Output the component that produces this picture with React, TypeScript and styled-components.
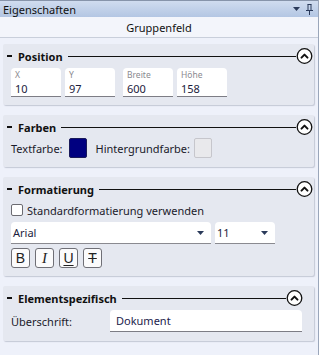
import styled, { createGlobalStyle } from 'styled-components';

const GlobalStyle = createGlobalStyle`
  html, body {
    margin: 0;
    padding: 0;
    background: #eef1fa;
  }
  body {
    font-family: "Noto Sans", "Open Sans", sans-serif;
    font-size: 11px;
    color: #1a1a1a;
  }
`;

const Panel = styled.div`
  width: 318px;
  height: 355px;
  display: flex;
  flex-direction: column;
  border-right: 1px solid #9aa6ba;
  background: #eef1fa;
  overflow: hidden;
`;

const TitleBar = styled.div`
  height: 16px;
  display: flex;
  align-items: center;
  justify-content: space-between;
  padding: 0 5px 0 3px;
  border-top: 1px solid #8794aa;
  background: linear-gradient(#d0dcef, #b3c6e3);
  font-size: 11px;
  color: #111;
`;

const TitleIcons = styled.div`
  display: flex;
  align-items: center;
  gap: 6px;
`;

const SubHeader = styled.div`
  height: 20px;
  display: flex;
  align-items: center;
  justify-content: center;
  background: #f3f5fb;
  border-bottom: 1px solid #c9cfdb;
  font-size: 11px;
  color: #111;
`;

const Body = styled.div`
  display: flex;
  flex-direction: column;
  gap: 10px;
  padding: 6px 4px 0 3px;
`;

const Card = styled.section<{ $bottom: number }>`
  background: #e5e8f0;
  border-radius: 2px;
  box-shadow: 1px 1px 1px rgba(120, 130, 150, 0.35);
  padding: 4px 0 ${(p) => p.$bottom}px 0;
`;

const CardHeader = styled.div<{ $right: number }>`
  height: 16px;
  display: flex;
  align-items: center;
  padding: 0 ${(p) => p.$right}px 0 4px;
`;

const Dash = styled.span`
  width: 5px;
  height: 1.5px;
  background: #111;
  margin-right: 6px;
`;

const CardTitle = styled.span`
  font-weight: 700;
  font-size: 11px;
  color: #111;
`;

const Rule = styled.div`
  flex: 1;
  height: 1px;
  background: #111;
  margin-left: 5px;
`;

const CardContent = styled.div<{ $top: number }>`
  padding: ${(p) => p.$top}px 0 0 8px;
`;

const PosRow = styled.div`
  display: flex;
  gap: 8px;
`;

const PosGroup = styled.div`
  display: flex;
  gap: 4px;
`;

const PosField = styled.div`
  width: 50px;
  height: 29px;
  background: #fff;
  border-radius: 4px 4px 0 0;
  border-bottom: 1px solid #7d7d85;
  padding: 1px 0 0 4px;
  box-sizing: border-box;
  display: flex;
  flex-direction: column;
`;

const PosLabel = styled.span`
  font-size: 8.5px;
  line-height: 12px;
  color: #8a8a8f;
`;

const PosValue = styled.span`
  font-size: 11px;
  line-height: 15px;
  color: #1c1c3c;
`;

const ColorRow = styled.div`
  display: flex;
  align-items: center;
  height: 20px;
`;

const Label = styled.span`
  font-size: 11px;
  color: #1a1a2a;
`;

const Swatch = styled.div<{ $fill: string; $edge: string; $gapLeft: number; $gapRight: number }>`
  width: 18px;
  height: 20px;
  border-radius: 2px;
  background: ${(p) => p.$fill};
  border: 1px solid ${(p) => p.$edge};
  box-sizing: border-box;
  margin: 0 ${(p) => p.$gapRight}px 0 ${(p) => p.$gapLeft}px;
`;

const CheckRow = styled.label`
  display: flex;
  align-items: center;
  gap: 4px;
  height: 16px;
  font-size: 11px;
  color: #1a1a2a;
`;

const CheckBox = styled.span`
  width: 12px;
  height: 12px;
  box-sizing: border-box;
  border: 1px solid #6c6c72;
  border-radius: 2px;
  background: #fff;
`;

const SelectRow = styled.div`
  display: flex;
  gap: 4px;
  margin-top: 4px;
`;

const Select = styled.div<{ $width: number }>`
  width: ${(p) => p.$width}px;
  height: 22px;
  box-sizing: border-box;
  background: #fff;
  border-radius: 4px 4px 0 0;
  border-bottom: 1px solid #8a8a90;
  display: flex;
  align-items: center;
  justify-content: space-between;
  padding: 0 7px 0 2px;
  font-size: 11px;
  color: #1c1c3c;
`;

const ButtonRow = styled.div`
  display: flex;
  gap: 5px;
  margin-top: 4px;
`;

const FormatButton = styled.button`
  width: 19px;
  height: 20px;
  box-sizing: border-box;
  padding: 0;
  border: 1px solid #6f6f76;
  border-radius: 3px;
  background: #fbfbfc;
  color: #222;
  display: flex;
  align-items: center;
  justify-content: center;
  font-family: "Liberation Sans", Arial, sans-serif;
  font-size: 14px;
  line-height: 1;
`;

const ItalicGlyph = styled.span`
  font-family: "Liberation Serif", serif;
  font-style: italic;
  font-size: 15px;
`;

const UnderGlyph = styled.span`
  text-decoration: underline;
  text-underline-offset: 2px;
`;

const StrikeGlyph = styled.span`
  text-decoration: line-through;
`;

const FieldRow = styled.div`
  display: flex;
  align-items: center;
`;

const FieldLabel = styled.span`
  width: 99px;
  font-size: 11px;
  color: #1a1a2a;
`;

const TextField = styled.div`
  width: 192px;
  height: 22px;
  box-sizing: border-box;
  background: #fff;
  border-radius: 4px 4px 0 0;
  border-bottom: 1px solid #7d7d85;
  display: flex;
  align-items: center;
  padding-left: 6px;
  font-size: 11px;
  color: #1c1c4c;
`;

const CollapseIcon = () => (
  <svg width="17" height="16" viewBox="0 0 17 16">
    <circle cx="8.5" cy="8" r="7.3" fill="#fff" stroke="#111" strokeWidth="1.3" />
    <path d="M5.5 9.6 L8.5 6.6 L11.5 9.6" fill="none" stroke="#111" strokeWidth="2" strokeLinecap="round" strokeLinejoin="round" />
  </svg>
);

const Triangle = () => (
  <svg width="7" height="4" viewBox="0 0 7 4">
    <path d="M0 0 H7 L3.5 4 Z" fill="#2a3a5a" />
  </svg>
);

const Section = ({
  title,
  right = 1,
  top,
  bottom,
  children,
}: {
  title: string;
  right?: number;
  top: number;
  bottom: number;
  children: React.ReactNode;
}) => (
  <Card $bottom={bottom}>
    <CardHeader $right={right}>
      <Dash />
      <CardTitle>{title}</CardTitle>
      <Rule />
      <CollapseIcon />
    </CardHeader>
    <CardContent $top={top}>{children}</CardContent>
  </Card>
);

const positions = [
  [
    { label: 'X', value: '10' },
    { label: 'Y', value: '97' },
  ],
  [
    { label: 'Breite', value: '600' },
    { label: 'Höhe', value: '158' },
  ],
];

export default function App() {
  return (
    <>
      <GlobalStyle />
      <Panel>
        <TitleBar>
          <span>Eigenschaften</span>
          <TitleIcons>
            <Triangle />
            <svg width="7" height="11" viewBox="0 0 7 11">
              <path d="M1.5 0.5 H5.5 M2 0.5 V6 M5 0.5 V6 M0 6.5 H7 M3.5 6.5 V11" fill="none" stroke="#2a3a5a" strokeWidth="1" />
            </svg>
          </TitleIcons>
        </TitleBar>
        <SubHeader>Gruppenfeld</SubHeader>
        <Body>
          <Section title="Position" top={4} bottom={8}>
            <PosRow>
              {positions.map((group, i) => (
                <PosGroup key={i}>
                  {group.map((f) => (
                    <PosField key={f.label}>
                      <PosLabel>{f.label}</PosLabel>
                      <PosValue>{f.value}</PosValue>
                    </PosField>
                  ))}
                </PosGroup>
              ))}
            </PosRow>
          </Section>

          <Section title="Farben" top={3} bottom={9}>
            <ColorRow>
              <Label>Textfarbe:</Label>
              <Swatch $fill="#000080" $edge="#1a1a5a" $gapLeft={6} $gapRight={9} />
              <Label>Hintergrundfarbe:</Label>
              <Swatch $fill="#e9e9ec" $edge="#c6c6cc" $gapLeft={4} $gapRight={0} />
            </ColorRow>
          </Section>

          <Section title="Formatierung" top={5} bottom={8}>
            <CheckRow>
              <CheckBox />
              Standardformatierung verwenden
            </CheckRow>
            <SelectRow>
              <Select $width={200}>
                Arial
                <Triangle />
              </Select>
              <Select $width={60}>
                11
                <Triangle />
              </Select>
            </SelectRow>
            <ButtonRow>
              <FormatButton>B</FormatButton>
              <FormatButton>
                <ItalicGlyph>I</ItalicGlyph>
              </FormatButton>
              <FormatButton>
                <UnderGlyph>U</UnderGlyph>
              </FormatButton>
              <FormatButton>
                <StrikeGlyph>T</StrikeGlyph>
              </FormatButton>
            </ButtonRow>
          </Section>

          <Section title="Elementspezifisch" right={11} top={4} bottom={9}>
            <FieldRow>
              <FieldLabel>Überschrift:</FieldLabel>
              <TextField>Dokument</TextField>
            </FieldRow>
          </Section>
        </Body>
      </Panel>
    </>
  );
}
